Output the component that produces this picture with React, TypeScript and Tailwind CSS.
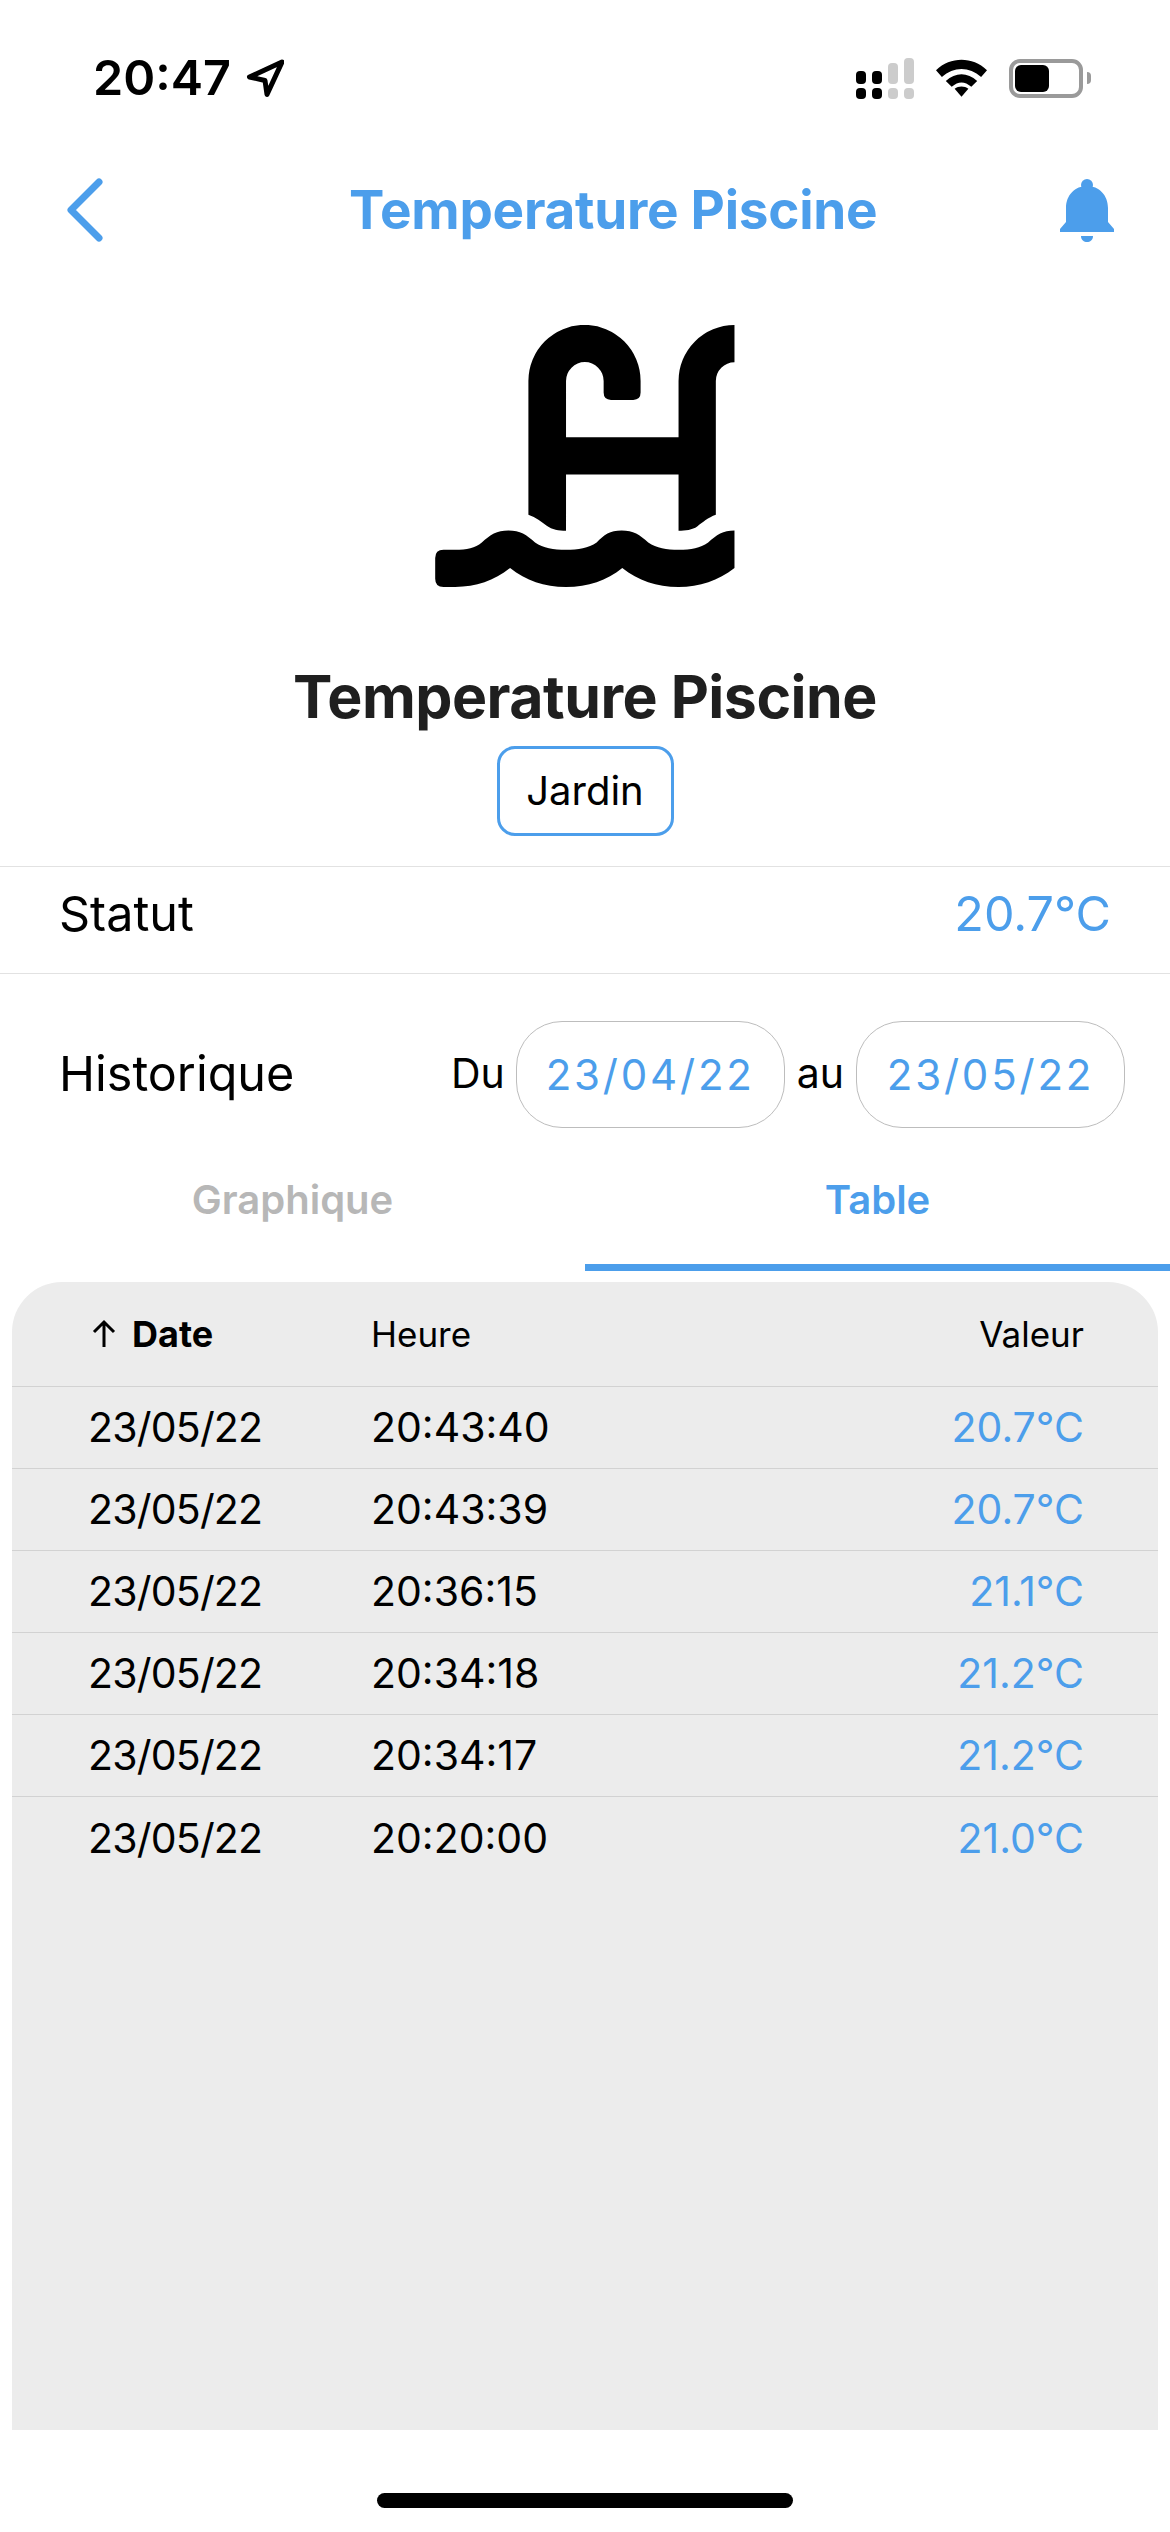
import React from "react";

const rows = [
  { date: "23/05/22", time: "20:43:40", value: "20.7°C" },
  { date: "23/05/22", time: "20:43:39", value: "20.7°C" },
  { date: "23/05/22", time: "20:36:15", value: "21.1°C" },
  { date: "23/05/22", time: "20:34:18", value: "21.2°C" },
  { date: "23/05/22", time: "20:34:17", value: "21.2°C" },
  { date: "23/05/22", time: "20:20:00", value: "21.0°C" },
];

function StatusIcons() {
  return (
    <div className="flex items-center">
      <svg width="58" height="41" viewBox="0 0 58 41" className="mr-[22px]">
        <rect x="0" y="13" width="10" height="13" rx="4" fill="#000" />
        <rect x="16" y="13" width="10" height="13" rx="4" fill="#000" />
        <rect x="32" y="5" width="10" height="21" rx="4" fill="#ccc" />
        <rect x="48" y="0" width="10" height="26" rx="4" fill="#ccc" />
        <rect x="0" y="30" width="10" height="11" rx="4" fill="#000" />
        <rect x="16" y="30" width="10" height="11" rx="4" fill="#000" />
        <rect x="32" y="30" width="10" height="11" rx="4" fill="#ccc" />
        <rect x="48" y="30" width="10" height="11" rx="4" fill="#ccc" />
      </svg>
      <svg width="51" height="38" viewBox="0 0 52 38" className="mr-[22px]">
        <path d="M0 11 C15 -3 37 -3 52 11 L46 18 C34 7 18 7 6 18 Z" fill="#000" />
        <path d="M10 22 C20 13 32 13 42 22 L36 28 C29 22 23 22 16 28 Z" fill="#000" />
        <path d="M19 30 C23 27 29 27 33 30 L26 38 Z" fill="#000" />
      </svg>
      <div className="flex items-center">
        <div className="flex h-[39px] w-[74px] items-center rounded-[11px] border-[4px] border-[#9a9a9a] p-[2px]">
          <div className="h-[27px] w-[34px] rounded-[6px] bg-black" />
        </div>
        <div className="ml-[4px] h-[12px] w-[4px] rounded-r-full bg-[#9a9a9a]" />
      </div>
    </div>
  );
}

function LocationArrow() {
  return (
    <svg width="40" height="40" viewBox="0 0 40 40" className="ml-[13px]">
      <path
        d="M38 4 L5.5 19 L21 22.5 L23 36.5 Z"
        fill="none"
        stroke="#000"
        strokeWidth="5"
        strokeLinejoin="round"
      />
    </svg>
  );
}

function PoolLogo() {
  return (
    <svg width="300" height="263" viewBox="105 75 900 790">
      <path
        fill="#000"
        d="M385 645 V243 A168.5 168.5 0 0 1 722 243 V278 Q722 300 700 300 H633 Q611 300 611 278 V243 A56.5 56.5 0 0 0 498 243 V412 H836 V243 A168 168 0 0 1 1004 75 V187 A56 56 0 0 0 948 243 V645 C925 653 908 668 892 680 C878 690 856 693 836 693 V524 H498 V693 C476 693 456 690 440 678 C424 666 408 653 385 645 Z"
      />
      <path
        fill="#000"
        d="M130 750 H165 C200 750 225 745 245 728 C270 705 290 692 325 692 C360 692 380 705 405 728 C430 745 460 750 498 750 C535 750 565 745 590 728 C612 705 630 692 665 692 C700 692 720 705 745 728 C770 745 800 750 836 750 C875 750 900 745 925 728 C950 705 970 692 1004 692 V805 C955 843 900 862 836 862 C770 862 715 843 667 805 C620 843 565 862 498 862 C432 862 378 843 330 805 C282 843 228 862 165 862 H130 Q105 862 105 837 V775 Q105 750 130 750 Z"
      />
    </svg>
  );
}

function DatePill({ value }: { value: string }) {
  return (
    <div className="flex h-[107px] w-[269px] items-center justify-center rounded-[46px] border border-[#bdbdbd] text-[42px] tracking-[2.8px] text-[#4c9eeb]">
      {value}
    </div>
  );
}

export default function App() {
  return (
    <div
      className="flex h-[2532px] w-[1170px] flex-col overflow-hidden bg-white text-black"
      style={{ fontFamily: "Inter, 'Noto Sans', sans-serif" }}
    >
      <div className="flex h-[156px] items-center justify-between pl-[93px] pr-[79px]">
        <div className="flex items-center">
          <span className="text-[48.5px] font-semibold leading-none">20:47</span>
          <LocationArrow />
        </div>
        <StatusIcons />
      </div>

      <div className="flex h-[108px] items-center pl-[65px] pr-[56px]">
        <svg width="40" height="64" viewBox="0 0 40 64">
          <path d="M34 4 L6 32 L34 60" fill="none" stroke="#4c9eeb" strokeWidth="7" strokeLinecap="round" strokeLinejoin="round" />
        </svg>
        <span className="ml-[244px] text-[53px] font-bold leading-none tracking-[-0.25px] text-[#4c9eeb]">Temperature Piscine</span>
        <svg width="54" height="63" viewBox="0 0 54 63" className="ml-auto">
          <circle cx="27" cy="6" r="6" fill="#4c9eeb" />
          <path
            fill="#4c9eeb"
            d="M6 43 V29 C6 16 15 7 27 7 C39 7 48 16 48 29 V43 L54 50 V53 H0 V50 Z"
          />
          <path fill="#4c9eeb" d="M21 57 H33 C33 61 30 63 27 63 C24 63 21 61 21 57 Z" />
        </svg>
      </div>

      <div className="mt-[61px] flex justify-center">
        <PoolLogo />
      </div>

      <div className="mt-[80px] text-center text-[59px] font-bold leading-[58px] tracking-[-0.5px] text-[#1f1f1f]">
        Temperature Piscine
      </div>

      <div className="mt-[20px] flex justify-center">
        <div className="flex h-[90px] w-[177px] items-center justify-center rounded-[18px] border-[3px] border-[#4c9eeb] text-[40px]">
          Jardin
        </div>
      </div>

      <div className="mt-[30px] flex h-[108px] items-center justify-between border-y border-[#e2e2e2] pb-[12px] pl-[59px] pr-[59px] text-[48.5px]">
        <span>Statut</span>
        <span className="text-[#4c9eeb]">20.7°C</span>
      </div>

      <div className="flex h-[180px] items-center pl-[59px] pr-[45px] pt-[20px]">
        <span className="text-[48.5px]">Historique</span>
        <div className="ml-auto flex items-center">
          <span className="mr-[11px] text-[41px]">Du</span>
          <DatePill value="23/04/22" />
          <span className="mx-[12px] text-[41px]">au</span>
          <DatePill value="23/05/22" />
        </div>
      </div>

      <div className="flex h-[117px] text-[40px] font-semibold">
        <div className="flex w-[585px] items-start justify-center pt-[16px] text-[#b7b7b7]">Graphique</div>
        <div className="flex w-[585px] items-start justify-center border-b-[7px] border-[#4c9eeb] pt-[16px] text-[#4c9eeb]">
          Table
        </div>
      </div>

      <div className="mx-[12px] mt-[11px] h-[1148px] rounded-t-[50px] bg-[#ececec]">
        <div className="grid h-[105px] grid-cols-[283px_1fr_auto] items-center border-b border-[#d2d2d2] pl-[76px] pr-[74px] text-[35px] leading-none">
          <div className="flex items-center text-[36px] font-bold">
            <svg width="30" height="30" viewBox="0 0 30 30" className="mr-[13px] ml-[1px]">
              <path d="M15 28 V3 M5 13 L15 3 L25 13" fill="none" stroke="#000" strokeWidth="3" />
            </svg>
            Date
          </div>
          <div>Heure</div>
          <div>Valeur</div>
        </div>
        {rows.map((row, index) => (
          <div
            key={row.time}
            className={`grid h-[82px] grid-cols-[283px_1fr_auto] items-center pl-[76px] pr-[74px] text-[41px] leading-none ${
              index < rows.length - 1 ? "border-b border-[#d2d2d2]" : ""
            }`}
          >
            <div className="tracking-[-0.8px]">{row.date}</div>
            <div>{row.time}</div>
            <div className="text-[#4c9eeb]">{row.value}</div>
          </div>
        ))}
      </div>

      <div className="mt-[63px] flex justify-center">
        <div className="h-[15px] w-[416px] rounded-full bg-black" />
      </div>
    </div>
  );
}
